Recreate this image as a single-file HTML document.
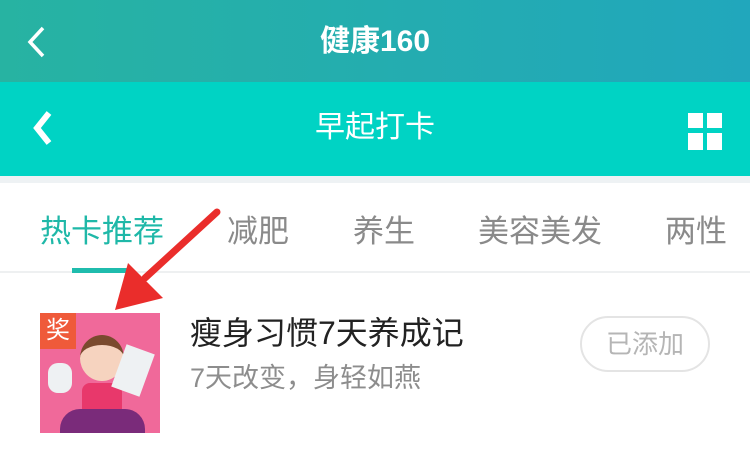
<!DOCTYPE html>
<html><head><meta charset="utf-8"><style>
body{margin:0;width:750px;height:452px;overflow:hidden;background:#fff;font-family:"Liberation Sans","Noto Sans CJK SC",sans-serif;position:relative}
.a{position:absolute}
</style></head><body>
<div class="a" style="left:0;top:0;width:750px;height:82px;background:linear-gradient(90deg,#27b3a2,#21a7bc)"></div>
<svg class="a" style="left:24px;top:24px" width="24" height="36"><path d="M19 4 L6 18 L19 32" stroke="#fff" stroke-width="3.5" fill="none"/></svg>
<div class="a" style="left:0;top:24px;width:750px;text-align:center;color:#fff;font-size:30px;font-weight:bold;line-height:36px">健康160</div>
<div class="a" style="left:0;top:82px;width:750px;height:94px;background:#00d3c4"></div>
<svg class="a" style="left:30px;top:110px" width="26" height="36"><path d="M19 3 L7 18 L19 33" stroke="#fff" stroke-width="6" fill="none"/></svg>
<div class="a" style="left:0;top:110px;width:750px;text-align:center;color:#fff;font-size:30px;line-height:36px">早起打卡</div>
<div class="a" style="left:688px;top:113px;width:15px;height:15px;background:#fff"></div>
<div class="a" style="left:707px;top:113px;width:15px;height:15px;background:#fff"></div>
<div class="a" style="left:688px;top:133px;width:15px;height:17px;background:#fff"></div>
<div class="a" style="left:707px;top:133px;width:15px;height:17px;background:#fff"></div>
<div class="a" style="left:0;top:176px;width:750px;height:7px;background:#eef2f4"></div>
<div class="a" style="left:0;top:213px;width:750px;font-size:31px;line-height:38px;color:#8a8a8a">
<span class="a" style="left:40px;color:#1fb8a8">热卡推荐</span>
<span class="a" style="left:227px">减肥</span>
<span class="a" style="left:353px">养生</span>
<span class="a" style="left:478px">美容美发</span>
<span class="a" style="left:665px">两性</span></div>
<div class="a" style="left:0;top:271px;width:750px;height:2px;background:#eef0f1"></div>
<div class="a" style="left:72px;top:268px;width:58px;height:5px;background:#1fbcad"></div>
<div class="a" style="left:40px;top:313px;width:120px;height:120px;background:#f0699a;overflow:hidden">
<div class="a" style="left:0;top:0;width:36px;height:36px;background:#ef5a3a;color:#fff;font-size:24px;text-align:center;line-height:36px">奖</div>
<div class="a" style="left:40px;top:22px;width:44px;height:46px;border-radius:50%;background:#f6d3bf;border-top:10px solid #7a4a2e;box-sizing:border-box"></div>
<div class="a" style="left:42px;top:70px;width:40px;height:35px;background:#e8386b;border-radius:8px 8px 0 0"></div>
<div class="a" style="left:20px;top:96px;width:85px;height:24px;background:#7a2b7a;border-radius:20px 20px 0 0"></div>
<div class="a" style="left:78px;top:35px;width:30px;height:45px;background:#eef1f3;transform:rotate(20deg)"></div>
<div class="a" style="left:8px;top:50px;width:24px;height:30px;background:#eef1f3;border-radius:10px"></div>
</div>
<div class="a" style="left:190px;top:313px;font-size:32px;line-height:40px;color:#222">瘦身习惯7天养成记</div>
<div class="a" style="left:190px;top:361px;font-size:27px;line-height:34px;color:#8d8d8d">7天改变，身轻如燕</div>
<div class="a" style="left:580px;top:316px;width:130px;height:56px;box-sizing:border-box;border:2px solid #e4e4e4;border-radius:28px;color:#b5b5b5;font-size:26px;text-align:center;line-height:52px">已添加</div>
<svg class="a" style="left:0;top:0" width="750" height="452"><path d="M217 212 L145 278" stroke="#ea2d2b" stroke-width="7" stroke-linecap="round"/><path d="M115 310 L128 263 L163 298 Z" fill="#ea2d2b"/></svg>
</body></html>
